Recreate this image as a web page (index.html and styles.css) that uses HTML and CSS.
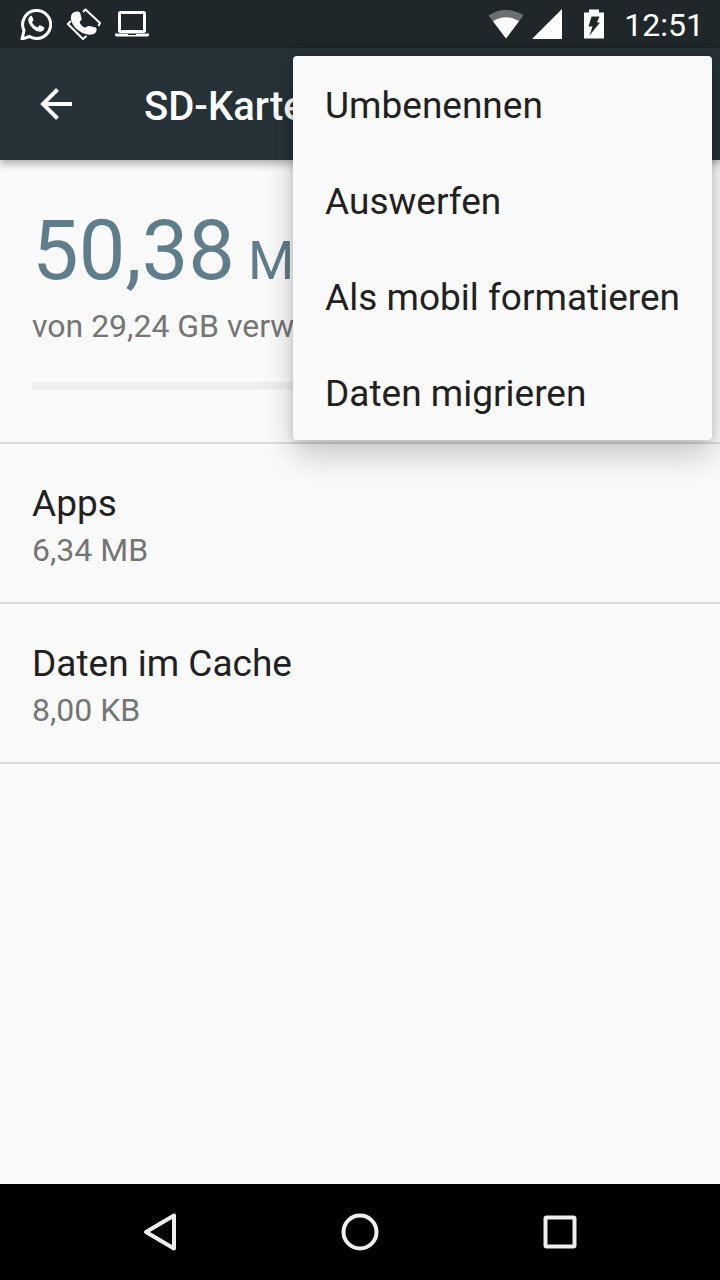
FILE: index.html
```html
<!DOCTYPE html>
<html lang="de">
<head>
<meta charset="utf-8">
<meta name="viewport" content="width=device-width, initial-scale=1">
<title>SD-Karte</title>
<link rel="stylesheet" href="styles.css">
</head>
<body>
<div class="screen">
  <div class="status-bar">
    <div class="status-group notifications">
      <svg class="status-icon" viewBox="0 0 32 32" aria-hidden="true">
        <path class="line" d="M2 31 4 22.500A14 14 0 1 1 9.500 28.500Z"/>
        <path class="solid" d="M10.300 8.200c-2.900 1.800-2.400 5.500-.2 8.800 2.700 4 6.300 6.700 9.900 6.700 2 0 4-1.400 4.300-3.300.1-.5 0-1-.5-1.300l-3.300-1.700c-.5-.2-.9-.1-1.200.2l-1.600 1.900c-2.500-1-4.600-3-5.700-5.300l1.300-1.800c.2-.4.2-.7 0-1.100l-1.300-3c-.3-.7-1.200-.6-1.700-.1Z"/>
      </svg>
      <svg class="status-icon wide" viewBox="0 0 36 32" aria-hidden="true">
        <path class="thin" d="M5 13 1.800 16 17 31 20.500 28M17 4 19.500 1.500 34 15 32.500 18"/>
        <path class="solid" d="M7.500 4.500c3-1.700 6-1.200 6.700.5l1.500 6c0 1.800-2.200 2-2 3.500 1 2.500 2.600 4 5 5 2 .3 2.500-1.800 4.500-1.500l5.800 1.200c2.200.7 1.900 3.200.7 5.300-1.900 2.300-6.200 2.800-10.200 1.500C11.500 23.500 6 17.500 5 11 4.600 8 5.500 5.700 7.500 4.500Z"/>
      </svg>
      <svg class="status-icon laptop" viewBox="0 0 36 32" aria-hidden="true">
        <rect class="line" x="5.500" y="4.500" width="25" height="19" rx="1"/>
        <path class="solid" d="M1 25.500h34v1.500q0 1.500-2 1.500H3q-2 0-2-1.500Z"/>
        <path class="notch" d="M14 26h8v1h-8z"/>
      </svg>
    </div>
    <div class="status-group">
      <svg class="status-icon wifi" viewBox="0 0 36 32" aria-hidden="true">
        <path class="faded" d="M18 30.500 .5 7.500C11 0 25 0 35.500 7.500Z"/>
        <path class="solid" d="M18 30.500 5 13.300Q18 5 31 13.300Z"/>
      </svg>
      <svg class="status-icon signal" viewBox="0 0 30 32" aria-hidden="true">
        <path class="solid" d="M0 31H30V1Z"/>
      </svg>
      <svg class="status-icon battery" viewBox="0 0 20 32" aria-hidden="true">
        <path class="solid" d="M0 4.500h5V1.500h10v3h5v26H0Z"/>
        <path class="bolt" d="M7.500 8.500h8L13 14.500h3L5.500 27.500l3-9H4.500Z"/>
      </svg>
      <time class="clock">12:51</time>
    </div>
  </div>

  <header class="toolbar">
    <button class="back" type="button" aria-label="Zurück">
      <svg class="back-icon" viewBox="0 0 32 32" aria-hidden="true"><path d="M32 16H3M17.500 1.500 3 16l14.500 14.500"/></svg>
    </button>
    <h1 class="title">SD-Karte</h1>
  </header>

  <main class="content">
    <section class="summary">
      <p class="amount">50,38<span class="unit"> MB</span></p>
      <p class="secondary" id="usage">von 29,24 GB verwendet</p>
      <progress class="meter" value="0" max="100" aria-labelledby="usage"></progress>
    </section>
    <ul class="categories">
      <li class="category">
        <p class="primary">Apps</p>
        <p class="secondary">6,34 MB</p>
      </li>
      <li class="category">
        <p class="primary">Daten im Cache</p>
        <p class="secondary">8,00 KB</p>
      </li>
    </ul>
  </main>

  <div class="menu" role="menu">
    <button class="menu-item" type="button" role="menuitem">Umbenennen</button>
    <button class="menu-item" type="button" role="menuitem">Auswerfen</button>
    <button class="menu-item" type="button" role="menuitem">Als mobil formatieren</button>
    <button class="menu-item" type="button" role="menuitem">Daten migrieren</button>
  </div>

  <nav class="nav-bar">
    <button class="nav-button" type="button" aria-label="Zurück">
      <svg class="nav-icon" viewBox="0 0 40 40" aria-hidden="true"><path d="M34 3.500V36.500L6 20Z"/></svg>
    </button>
    <button class="nav-button" type="button" aria-label="Startbildschirm">
      <svg class="nav-icon" viewBox="0 0 40 40" aria-hidden="true"><circle cx="20" cy="20" r="16.500"/></svg>
    </button>
    <button class="nav-button" type="button" aria-label="Übersicht">
      <svg class="nav-icon" viewBox="0 0 40 40" aria-hidden="true"><rect x="5.500" y="5.500" width="29" height="29" rx="1"/></svg>
    </button>
  </nav>
</div>
</body>
</html>
```
FILE: styles.css
```css
* {
  box-sizing: border-box;
}

body,
h1,
p,
ul {
  margin: 0;
  padding: 0;
}

body {
  font-family: Roboto, "Liberation Sans", sans-serif;
  color: #212121;
  background: #fafafa;
}

button {
  border: 0;
  padding: 0;
  background: none;
  font: inherit;
  color: inherit;
}

svg {
  display: block;
}

.screen {
  position: relative;
  display: flex;
  flex-direction: column;
  min-height: 100vh;
  overflow: hidden;
}

.status-bar {
  display: flex;
  justify-content: space-between;
  align-items: center;
  height: 48px;
  padding: 0 16px 0 20px;
  background: #20272b;
  color: #fff;
}

.status-group {
  display: flex;
  align-items: center;
}

.notifications {
  gap: 14px;
}

.status-icon {
  width: 32px;
  height: 32px;
}

.wide {
  width: 36px;
}

.laptop {
  width: 36px;
  margin-left: -2px;
}

.wifi {
  width: 36px;
  margin-right: 8px;
}

.signal {
  width: 30px;
  margin-right: 22px;
}

.battery {
  width: 20px;
  margin-right: 20px;
}

.solid {
  fill: #fff;
}

.faded {
  fill: #6b6f72;
}

.notch,
.bolt {
  fill: #20272b;
}

.line,
.thin {
  fill: none;
  stroke: #fff;
  stroke-width: 3;
  stroke-linejoin: round;
}

.thin {
  stroke-width: 2;
}

.clock {
  padding-top: 2px;
  font-size: 32px;
  line-height: 46px;
}

.toolbar {
  z-index: 1;
  display: flex;
  align-items: center;
  height: 112px;
  background: #263238;
  color: #fff;
  box-shadow: 0 4px 8px rgba(0, 0, 0, 0.3);
}

.back {
  display: grid;
  place-items: center;
  width: 112px;
  height: 112px;
}

.back-icon {
  width: 32px;
  height: 32px;
  fill: none;
  stroke: #fff;
  stroke-width: 4;
}

.title {
  padding: 6px 0 0 32px;
  font-size: 40px;
  line-height: 48px;
  font-weight: 500;
}

.content {
  flex: 1;
}

.summary {
  padding: 42px 32px 52px;
  border-bottom: 2px solid #dcdcdc;
}

.amount {
  margin-bottom: 4px;
  font-size: 83px;
  line-height: 98px;
  color: #607d8b;
}

.unit {
  font-size: 53px;
  line-height: 1;
}

.primary {
  font-size: 37px;
  line-height: 50px;
}

.secondary {
  font-size: 32px;
  line-height: 44px;
  color: #757575;
}

.meter {
  display: block;
  width: 100%;
  height: 8px;
  margin-top: 34px;
  border: 0;
  appearance: none;
  background: #efefef;
}

.meter::-webkit-progress-bar {
  background: #efefef;
}

.meter::-webkit-progress-value {
  background: #607d8b;
}

.categories {
  list-style: none;
}

.category {
  padding: 36px 32px 30px;
  border-bottom: 2px solid #dcdcdc;
}

.category .primary {
  line-height: 48px;
}

.menu {
  position: absolute;
  z-index: 2;
  top: 56px;
  right: 8px;
  display: flex;
  flex-direction: column;
  border-radius: 4px;
  background: #fafafa;
  box-shadow: 0 16px 32px rgba(0, 0, 0, 0.2), 0 0 10px rgba(0, 0, 0, 0.16);
}

.menu-item {
  height: 96px;
  padding: 2px 32px 0;
  font-size: 37px;
  text-align: left;
}

.nav-bar {
  display: flex;
  justify-content: center;
  height: 96px;
  background: #000;
}

.nav-button {
  display: grid;
  place-items: center;
  width: 200px;
  height: 96px;
}

.nav-icon {
  width: 40px;
  height: 40px;
  fill: none;
  stroke: #eee;
  stroke-width: 4;
  stroke-linejoin: round;
}
```
